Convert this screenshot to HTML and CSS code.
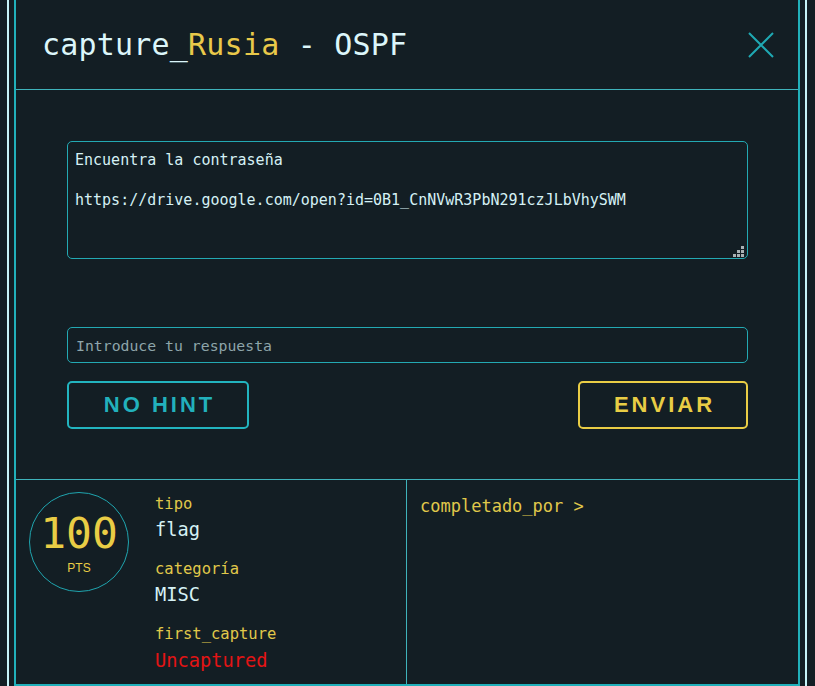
FILE: index.html
```html
<!DOCTYPE html>
<html lang="es">
<head>
<meta charset="utf-8">
<title>capture_Rusia - OSPF</title>
<link rel="stylesheet" href="styles.css">
</head>
<body>
<div class="frame">
  <div class="modal">
    <header class="header">
      <h1 class="title">capture_<span class="hl">Rusia</span> - OSPF</h1>
      <button class="close" aria-label="Cerrar">
        <svg width="26" height="26" viewBox="0 0 26 26"><path d="M1 1 L25 25 M25 1 L1 25" stroke="#1fa9b3" stroke-width="2" fill="none"/></svg>
      </button>
    </header>
    <main class="body">
      <div class="desc-wrap">
        <textarea class="desc" readonly>Encuentra la contraseña

https://drive.google.com/open?id=0B1_CnNVwR3PbN291czJLbVhySWM</textarea>
        <svg class="grip" width="11" height="11" viewBox="0 0 11 11"><g fill="#a9b2b5"><rect x="8" y="0" width="3" height="3"/><rect x="4" y="4" width="3" height="3"/><rect x="8" y="4" width="3" height="3"/><rect x="0" y="8" width="3" height="3"/><rect x="4" y="8" width="3" height="3"/><rect x="8" y="8" width="3" height="3"/></g></svg>
      </div>
      <input class="answer" type="text" placeholder="Introduce tu respuesta">
      <div class="actions">
        <button class="btn btn-hint">NO HINT</button>
        <button class="btn btn-send">ENVIAR</button>
      </div>
    </main>
    <footer class="footer">
      <div class="info">
        <div class="points">
          <span class="num">100</span>
          <span class="pts">PTS</span>
        </div>
        <dl class="meta">
          <dt>tipo</dt>
          <dd>flag</dd>
          <dt>categoría</dt>
          <dd>MISC</dd>
          <dt>first_capture</dt>
          <dd class="red">Uncaptured</dd>
        </dl>
      </div>
      <div class="solvers">completado_por &gt;</div>
    </footer>
  </div>
</div>
</body>
</html>
```

FILE: styles.css
```css
html, body {
  margin: 0;
  padding: 0;
  background: #131e24;
  height: 686px;
  overflow: hidden;
}
body {
  font-family: "DejaVu Sans Mono", monospace;
  color: #d5f1f5;
}
.frame {
  margin-left: 7px;
  width: 786px;
  height: 686px;
  border-left: 2px solid #c6f3f8;
  border-right: 2px solid #c6f3f8;
  padding: 0 5px;
}
.modal {
  height: 686px;
  box-sizing: border-box;
  border: 2px solid #21b0ba;
  border-top: 0;
  display: flex;
  flex-direction: column;
}
.header {
  height: 89px;
  border-bottom: 1px solid #3fb3bb;
  display: flex;
  align-items: center;
  justify-content: space-between;
  padding: 0 24px 0 26px;
}
.title {
  margin: 0;
  font-weight: normal;
  font-size: 30px;
  letter-spacing: 0.2px;
  color: #dcf6fa;
}
.hl { color: #e9c94a; }
.close {
  background: none;
  border: 0;
  padding: 0;
  width: 26px;
  height: 26px;
  display: flex;
}
.body {
  padding: 51px 50px 50px 51px;
  display: flex;
  flex-direction: column;
}
.desc-wrap {
  position: relative;
  height: 118px;
}
.desc {
  box-sizing: border-box;
  width: 100%;
  height: 118px;
  margin: 0;
  resize: none;
  display: block;
  background: transparent;
  border: 1px solid #23a9b3;
  border-radius: 5px;
  padding: 8px 7px;
  font-family: "DejaVu Sans Mono", monospace;
  font-size: 15px;
  line-height: 20px;
  color: #d5f1f5;
  outline: none;
}
.grip {
  position: absolute;
  right: 4px;
  bottom: 2px;
}
.answer {
  margin-top: 68px;
  box-sizing: border-box;
  height: 36px;
  width: 100%;
  background: transparent;
  border: 1px solid #23a9b3;
  border-radius: 5px;
  padding: 0 8px;
  font-family: "DejaVu Sans Mono", monospace;
  font-size: 14.8px;
  color: #d5f1f5;
  outline: none;
}
.answer::placeholder { color: #8ea5aa; }
.actions {
  margin-top: 18px;
  display: flex;
  justify-content: space-between;
}
.btn {
  height: 48px;
  box-sizing: border-box;
  background: transparent;
  border-radius: 5px;
  font-family: "Liberation Sans", Arial, sans-serif;
  font-weight: bold;
  font-size: 22px;
  letter-spacing: 3px;
  padding: 0 0 0 3px;
}
.btn-hint {
  width: 182px;
  border: 2px solid #22b4bf;
  color: #22b1bc;
}
.btn-send {
  width: 170px;
  border: 2px solid #e9cd45;
  color: #e9cd45;
}
.footer {
  flex: 1;
  border-top: 1px solid #3fb3bb;
  display: flex;
}
.info {
  width: 391px;
  border-right: 1px solid #3fb3bb;
  display: flex;
  padding: 12px 0 0 13px;
  box-sizing: border-box;
}
.points {
  width: 100px;
  height: 100px;
  box-sizing: border-box;
  border: 1px solid #1fa5af;
  border-radius: 50%;
  display: flex;
  flex-direction: column;
  align-items: center;
  padding-top: 19px;
  flex-shrink: 0;
}
.num {
  font-size: 43px;
  line-height: 43px;
  color: #e9cd45;
}
.pts {
  margin-top: 6px;
  font-family: "Liberation Sans", Arial, sans-serif;
  font-size: 12px;
  line-height: 14px;
  color: #e9cd45;
}
.meta {
  margin: 2px 0 0 26px;
}
.meta dt {
  font-size: 15.5px;
  line-height: 20px;
  color: #e0c84a;
  margin-top: 17px;
}
.meta dt:first-child { margin-top: 0; }
.meta dd {
  margin: 4px 0 0 0;
  font-size: 18.7px;
  line-height: 24px;
  color: #d5f1f5;
}
.meta dd.red { color: #e31414; margin-top: 5px; }
.solvers {
  flex: 1;
  padding: 15px 0 0 13px;
  font-size: 17px;
  line-height: 22px;
  color: #e0c84a;
}
```
